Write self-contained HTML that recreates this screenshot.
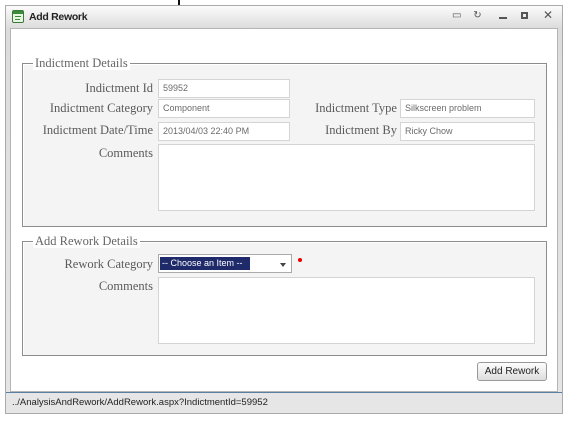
<!DOCTYPE html>
<html><head><style>
*{box-sizing:border-box;margin:0;padding:0}
body{width:567px;height:425px;background:#fff;position:relative;overflow:hidden;font-family:"Liberation Serif",serif}
.abs{position:absolute}
.win{left:5px;top:5px;width:558px;height:409px;border:1px solid #aaa;background:linear-gradient(#fbfbfb,#dcdcdc 22px,#e6e6e6)}
.content{left:10px;top:28px;width:548px;height:364px;background:#fff;border:1px solid #b5b5b5}
.fs{border:1px solid #8c8c8c;background:#f4f4f4;box-shadow:inset 1px 1px 0 #fff}
.lg{background:#fff;color:#666;font-size:12.5px;padding:0 2px;line-height:14px}
.lab{color:#5a5a5a;font-size:12.5px;text-align:right;line-height:16px}
.inp{background:#fff;border:1px solid #d4d4d4;font-family:"Liberation Sans",sans-serif;font-size:9px;color:#6b6b6b;padding-left:4px;line-height:17px;white-space:nowrap;overflow:hidden}
.sans{font-family:"Liberation Sans",sans-serif}
</style></head><body>
<div class="abs" style="left:178px;top:0;width:2px;height:7px;background:#111"></div>
<div class="abs win"></div>
<div class="abs" style="left:12px;top:10px;width:12px;height:13px;border:1px solid #3a7a3a;background:#e8f5e0;border-radius:2px"></div>
<div class="abs" style="left:13px;top:11px;width:10px;height:3px;background:#3a8c3a"></div>
<div class="abs" style="left:15px;top:16px;width:6px;height:1px;background:#3a8c3a"></div>
<div class="abs" style="left:15px;top:19px;width:5px;height:1px;background:#3a8c3a"></div>
<div class="abs sans" style="left:29px;top:11px;font-size:10.5px;font-weight:bold;color:#222;letter-spacing:-0.3px">Add Rework</div>
<div class="abs sans" style="left:452px;top:10px;font-size:10px;color:#555;word-spacing:9px">▭ ↻ </div>
<div class="abs" style="left:499px;top:17px;width:8px;height:2px;background:#555"></div>
<div class="abs" style="left:521px;top:12px;width:7px;height:7px;border:2px solid #555"></div>
<div class="abs sans" style="left:543px;top:8px;font-size:12px;color:#555">✕</div>
<div class="abs content"></div>
<div class="abs fs" style="left:22px;top:63px;width:525px;height:164px"></div>
<div class="abs lg" style="left:33px;top:56px;background:#fff">Indictment Details</div>
<div class="abs lab" style="left:20px;top:80px;width:133px">Indictment Id</div>
<div class="abs inp" style="left:158px;top:79px;width:132px;height:19px">59952</div>
<div class="abs lab" style="left:20px;top:100px;width:133px">Indictment Category</div>
<div class="abs inp" style="left:158px;top:99px;width:132px;height:19px">Component</div>
<div class="abs lab" style="left:280px;top:100px;width:117px">Indictment Type</div>
<div class="abs inp" style="left:400px;top:99px;width:135px;height:19px">Silkscreen problem</div>
<div class="abs lab" style="left:20px;top:122px;width:133px">Indictment Date/Time</div>
<div class="abs inp" style="left:158px;top:122px;width:132px;height:19px">2013/04/03 22:40 PM</div>
<div class="abs lab" style="left:280px;top:122px;width:117px">Indictment By</div>
<div class="abs inp" style="left:400px;top:122px;width:135px;height:19px">Ricky Chow</div>
<div class="abs lab" style="left:20px;top:145px;width:133px">Comments</div>
<div class="abs inp" style="left:158px;top:144px;width:377px;height:67px"></div>
<div class="abs fs" style="left:22px;top:241px;width:525px;height:115px"></div>
<div class="abs lg" style="left:33px;top:234px;background:#fff">Add Rework Details</div>
<div class="abs lab" style="left:20px;top:256px;width:133px">Rework Category</div>
<div class="abs inp" style="left:158px;top:254px;width:134px;height:19px;border-color:#aaa;padding:2px"></div>
<div class="abs sans" style="left:160px;top:257px;width:90px;height:13px;background:#1e2a6a;color:#fff;font-size:9px;line-height:13px;padding-left:2px;white-space:nowrap;overflow:hidden">-- Choose an Item --</div>
<div class="abs" style="left:280px;top:263px;border-left:3px solid transparent;border-right:3px solid transparent;border-top:4px solid #444"></div>
<div class="abs" style="left:298px;top:258px;width:4px;height:4px;border-radius:2px;background:#e00"></div>
<div class="abs lab" style="left:20px;top:278px;width:133px">Comments</div>
<div class="abs inp" style="left:158px;top:277px;width:377px;height:67px"></div>
<div class="abs sans" style="left:477px;top:362px;width:70px;height:19px;border:1px solid #999;border-radius:3px;background:linear-gradient(#fdfdfd,#dedede);font-size:10px;color:#222;text-align:center;line-height:17px">Add Rework</div>
<div class="abs" style="left:6px;top:392px;width:556px;height:1px;background:#5a7fa0"></div>
<div class="abs sans" style="left:12px;top:397px;font-size:9.5px;color:#222">../AnalysisAndRework/AddRework.aspx?IndictmentId=59952</div>
</body></html>
